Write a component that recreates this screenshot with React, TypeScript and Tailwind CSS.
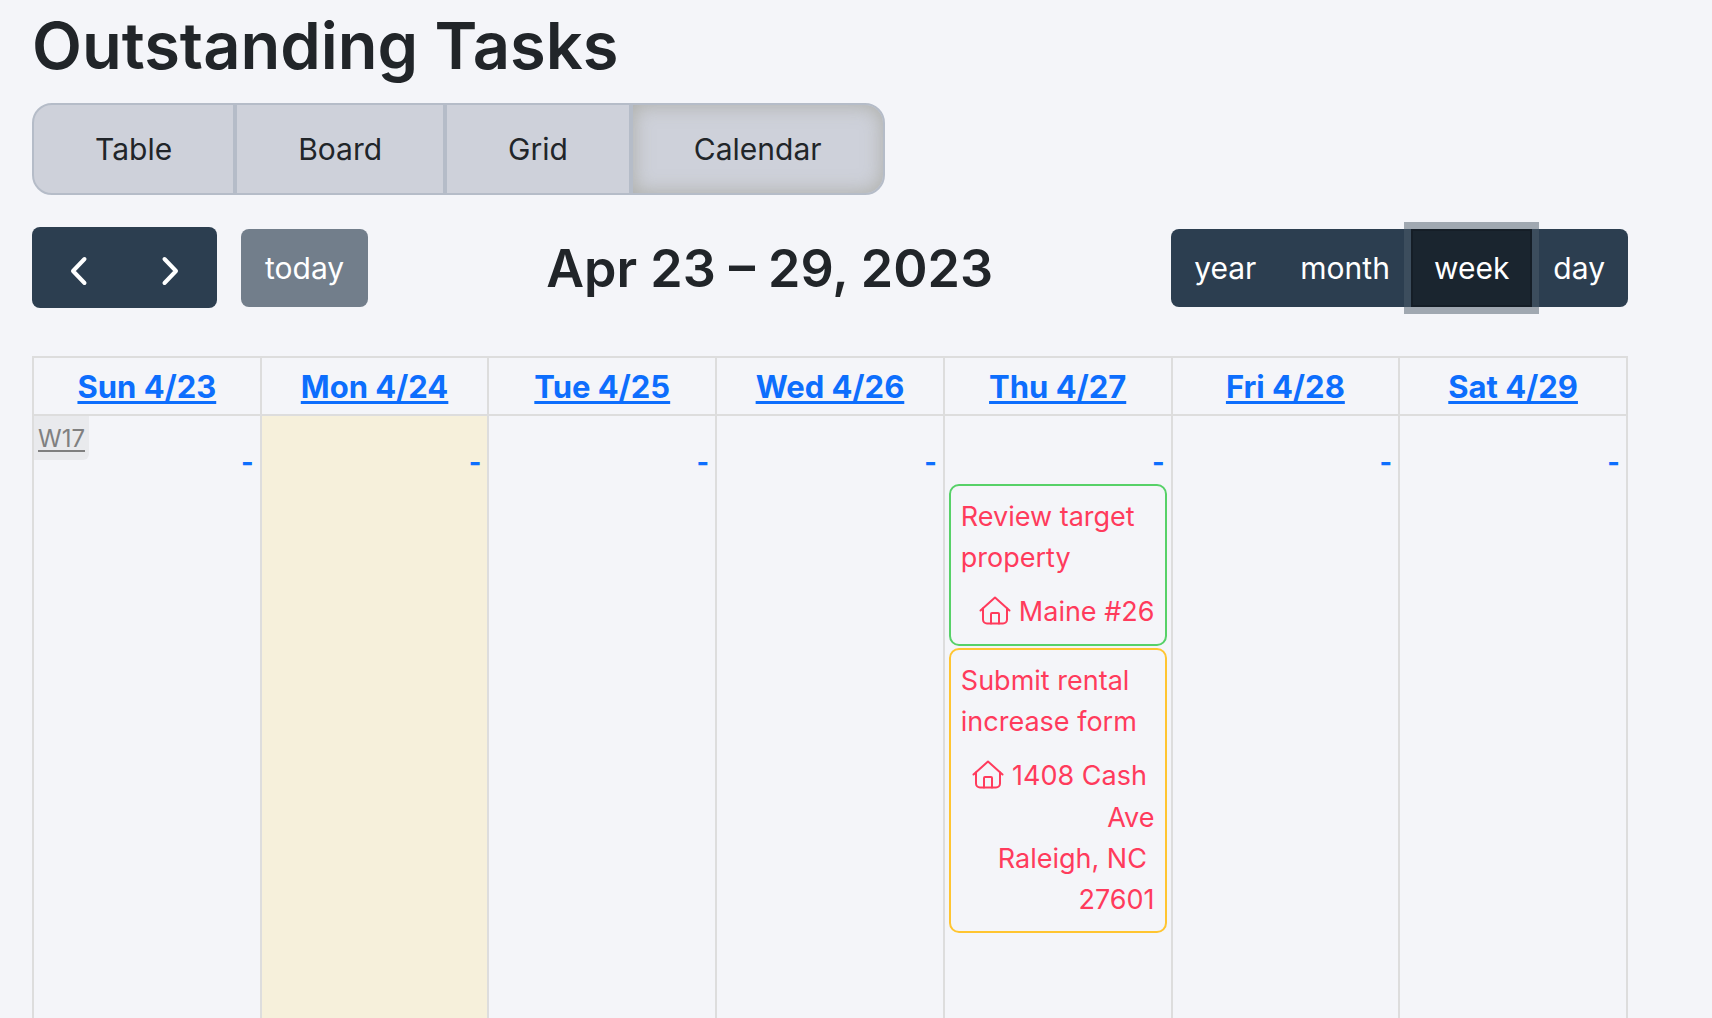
import { ReactNode, useState } from "react";

const views = ["Table", "Board", "Grid", "Calendar"];
const ranges = ["year", "month", "week", "day"];

type Task = { title: string; place: string[]; border: string };

type Day = { label: string; week?: string; today?: boolean; tasks?: Task[] };

const days: Day[] = [
  { label: "Sun 4/23", week: "W17" },
  { label: "Mon 4/24", today: true },
  { label: "Tue 4/25" },
  { label: "Wed 4/26" },
  {
    label: "Thu 4/27",
    tasks: [
      { title: "Review target property", place: ["Maine #26"], border: "border-[#57d168]" },
      {
        title: "Submit rental increase form",
        place: ["1408 Cash\u00a0", "Ave", "Raleigh, NC\u00a0", "27601"],
        border: "border-[#ffc531]",
      },
    ],
  },
  { label: "Fri 4/28" },
  { label: "Sat 4/29" },
];

function HouseIcon() {
  return (
    <svg
      className="mr-2 inline-block h-8 w-8 align-[-5px]"
      viewBox="0 0 32 32"
      fill="none"
      stroke="currentColor"
      strokeWidth="2"
      strokeLinecap="round"
      strokeLinejoin="round"
      aria-hidden="true"
    >
      <path d="M1.5 16.5 16 3.500l14.500 13" />
      <path d="M4 14.500V25.500a4 4 0 0 0 4 4h16a4 4 0 0 0 4-4V14.500" />
      <path d="M12 29.500V20a1 1 0 0 1 1-1h6a1 1 0 0 1 1 1v9.500" />
    </svg>
  );
}

function Chevron({ d }: { d: string }) {
  return (
    <svg
      className="h-8 w-8"
      viewBox="0 0 32 32"
      fill="none"
      stroke="currentColor"
      strokeWidth="4"
      strokeLinecap="round"
      strokeLinejoin="round"
      aria-hidden="true"
    >
      <path d={d} />
    </svg>
  );
}

function NavButton({ label, children }: { label: string; children: ReactNode }) {
  return (
    <button type="button" aria-label={label} className="flex flex-1 items-center justify-center pt-1.5">
      {children}
    </button>
  );
}

function TaskCard({ task }: { task: Task }) {
  return (
    <a
      href="#task"
      className={`block rounded-[10px] border-2 px-2.5 pt-2.5 pb-[11px] text-[27px] leading-[41px] text-[#ff3b5c] ${task.border}`}
    >
      <span className="block">{task.title}</span>
      <span className="mt-3 block text-right">
        {task.place.map((line, i) => (
          <span key={line} className="block whitespace-nowrap first:leading-[43px]">
            {i === 0 && <HouseIcon />}
            {line}
          </span>
        ))}
      </span>
    </a>
  );
}

export default function App() {
  const [view, setView] = useState("Calendar");
  const [range, setRange] = useState("week");

  return (
    <main className="min-h-screen bg-[#f4f5f9] pt-1 pr-[84px] pl-8 font-['Inter',sans-serif] text-[#212529]">
      <h1 className="text-[65px] leading-[84px] font-semibold">Outstanding Tasks</h1>

      <div className="mt-[15px] flex h-[92px] w-fit" role="group" aria-label="View">
        {views.map((v) => (
          <button
            key={v}
            type="button"
            aria-pressed={v === view}
            onClick={() => setView(v)}
            className={`border-2 border-[#b5bcc8] bg-[#ced1da] px-[61px] text-[30px] first:rounded-l-[20px] last:rounded-r-[20px] ${
              v === view ? "shadow-[inset_0_0_20px_rgba(160,160,150,0.75)]" : ""
            }`}
          >
            {v}
          </button>
        ))}
      </div>

      <div className="mt-8 flex items-center justify-between">
        <div className="flex items-center gap-6">
          <div className="flex h-[81px] w-[185px] rounded-lg bg-[#2c3e50] text-white">
            <NavButton label="Previous">
              <Chevron d="M22.500 4 11 16 22.500 28" />
            </NavButton>
            <NavButton label="Next">
              <Chevron d="M9.500 4 21 16 9.500 28" />
            </NavButton>
          </div>
          <button type="button" disabled className="h-[78px] rounded-lg bg-[#727e8b] px-6 pt-0.5 text-[30px] text-white">
            today
          </button>
        </div>

        <h2 className="pt-0.5 text-[52px] leading-[64px] font-semibold">Apr 23 – 29, 2023</h2>

        <div className="flex h-[78px] -space-x-0.5 rounded-lg bg-[#2c3e50] text-[30px] text-white" role="group" aria-label="Range">
          {ranges.map((r) => (
            <button
              key={r}
              type="button"
              aria-pressed={r === range}
              onClick={() => setRange(r)}
              className={`border-2 px-[21px] pt-0.5 ${
                r === range
                  ? "border-[#151e27] bg-[#1a252f] shadow-[0_0_0_7px_rgba(76,91,106,0.5)]"
                  : "border-transparent"
              }`}
            >
              {r}
            </button>
          ))}
        </div>
      </div>

      <table className="mt-12 w-full table-fixed border-collapse">
        <thead>
          <tr className="h-[58px]">
            {days.map((d) => (
              <th key={d.label} scope="col" className="border-2 border-[#ddd] p-0 pt-0.5 text-[31px] leading-[48px] font-bold">
                <a href="#day" className="text-[#0d6efd] underline decoration-[3px] underline-offset-[3px]">
                  {d.label}
                </a>
              </th>
            ))}
          </tr>
        </thead>
        <tbody>
          <tr className="h-[603px]">
            {days.map((d) => (
              <td
                key={d.label}
                className={`relative border-x-2 border-[#ddd] p-0 align-top ${d.today ? "bg-[#f6f0db]" : ""}`}
              >
                {d.week && (
                  <a
                    href="#week"
                    className="absolute top-0 left-0 rounded-br-md bg-[#e9eaed] px-1 pt-[3px] pb-px text-[24px] leading-[40px] text-[#808080] underline decoration-2 underline-offset-[3px]"
                  >
                    {d.week}
                  </a>
                )}
                <div className="px-1 pt-[27px]">
                  <div className="mb-px pr-[2px] text-right text-[27px] leading-[40px] font-bold">
                    <a href="#add" aria-label={`Add task on ${d.label}`} className="text-[#0d6efd]">
                      -
                    </a>
                  </div>
                  <div className="flex flex-col gap-0.5">
                    {d.tasks?.map((t) => (
                      <TaskCard key={t.title} task={t} />
                    ))}
                  </div>
                </div>
              </td>
            ))}
          </tr>
        </tbody>
      </table>
    </main>
  );
}
